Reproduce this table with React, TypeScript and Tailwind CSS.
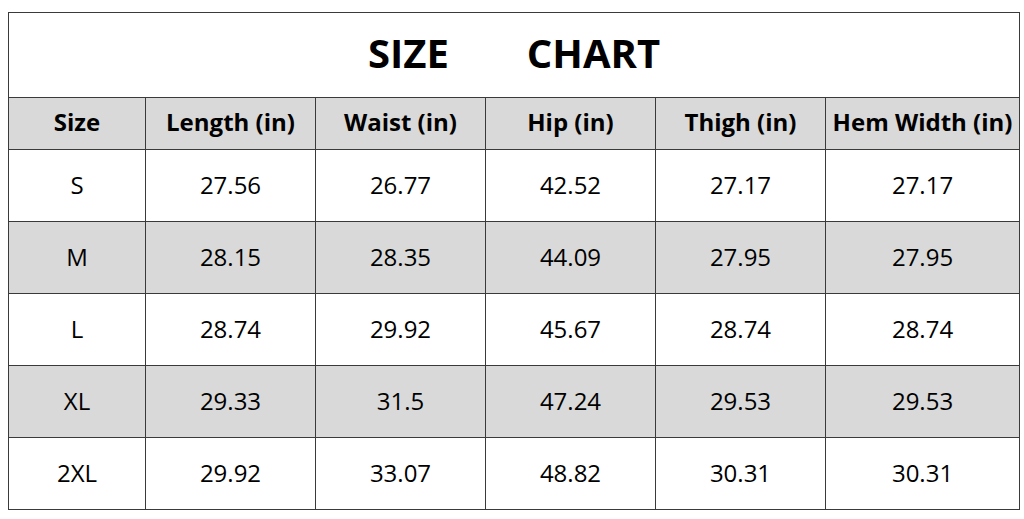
import React from "react";

const headers = ["Size", "Length (in)", "Waist (in)", "Hip (in)", "Thigh (in)", "Hem Width (in)"];

const rows = [
  ["S", "27.56", "26.77", "42.52", "27.17", "27.17"],
  ["M", "28.15", "28.35", "44.09", "27.95", "27.95"],
  ["L", "28.74", "29.92", "45.67", "28.74", "28.74"],
  ["XL", "29.33", "31.5", "47.24", "29.53", "29.53"],
  ["2XL", "29.92", "33.07", "48.82", "30.31", "30.31"],
];

const widths = ["w-[137px]", "w-[170px]", "w-[170px]", "w-[170px]", "w-[170px]", "w-[194px]"];

export default function App() {
  return (
    <div className="h-[519px] w-[1024px] bg-white pl-[8px] pt-[12px] font-['Open_Sans',sans-serif] text-black">
      <table className="w-[1011px] table-fixed border-collapse border border-[#3a3a3a]">
        <colgroup>
          {widths.map((w, i) => (
            <col key={i} className={w} />
          ))}
        </colgroup>
        <tbody>
          <tr className="h-[85px]">
            <td colSpan={6} className="border border-[#3a3a3a] pb-[4px] text-center text-[40px] font-bold">
              <span>SIZE</span>
              <span className="pl-[78px]">CHART</span>
            </td>
          </tr>
          <tr className="h-[52px] bg-[#d9d9d9]">
            {headers.map((h) => (
              <td key={h} className="border border-[#3a3a3a] pb-[3px] text-center text-[24px] font-bold">
                {h}
              </td>
            ))}
          </tr>
          {rows.map((r, i) => (
            <tr key={r[0]} className={`h-[72px] ${i % 2 === 1 ? "bg-[#d9d9d9]" : "bg-white"}`}>
              {r.map((v, j) => (
                <td key={j} className="border border-[#3a3a3a] pb-[2px] text-center text-[24px]">
                  {v}
                </td>
              ))}
            </tr>
          ))}
        </tbody>
      </table>
    </div>
  );
}
